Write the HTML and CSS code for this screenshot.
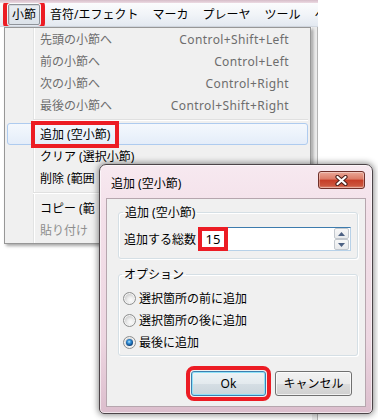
FILE: index.html
```html
<!DOCTYPE html>
<html lang="ja">
<head>
    <meta charset="UTF-8">
    <meta name="viewport" content="width=device-width, initial-scale=1.0">
    <title>追加 (空小節)</title>
    <link rel="stylesheet" href="styles.css">
</head>
<body>
    <div class="app">
        <div class="app-frame"></div>
        <div class="menubar">
            <span class="menubar-item is-open">小節</span>
            <span class="menubar-item">音符/エフェクト</span>
            <span class="menubar-item">マーカ</span>
            <span class="menubar-item">プレーヤ</span>
            <span class="menubar-item">ツール</span>
            <span class="menubar-item">ヘ</span>
        </div>
        <div class="workspace">
            <div class="sheet"></div>
            <div class="edge"></div>
        </div>
    </div>

    <!-- open "小節" menu -->
    <div class="menu">
        <div class="menu-item is-disabled"><span>先頭の小節へ</span><span class="shortcut">Control+Shift+Left</span></div>
        <div class="menu-item is-disabled"><span>前の小節へ</span><span class="shortcut">Control+Left</span></div>
        <div class="menu-item is-disabled"><span>次の小節へ</span><span class="shortcut">Control+Right</span></div>
        <div class="menu-item is-disabled"><span>最後の小節へ</span><span class="shortcut">Control+Shift+Right</span></div>
        <div class="menu-sep"></div>
        <div class="menu-item is-hover"><span class="mark">追加 (空小節)</span></div>
        <div class="menu-item"><span>クリア (選択小節)</span></div>
        <div class="menu-item"><span>削除 (範囲</span></div>
        <div class="menu-sep is-wide"></div>
        <div class="menu-item"><span>コピー (範</span></div>
        <div class="menu-item is-faded"><span>貼り付け</span></div>
    </div>

    <!-- dialog -->
    <div class="dialog">
        <div class="dialog-title">
            <span class="dialog-title-text">追加 (空小節)</span>
            <span class="dialog-close">
                <svg width="13" height="11" viewBox="0 0 13 11">
                    <path d="M2.5 2 L10.5 9 M10.5 2 L2.5 9" stroke="#4a1e18" stroke-width="4.2" stroke-linecap="round"/>
                    <path d="M2.5 2 L10.5 9 M10.5 2 L2.5 9" stroke="#fff" stroke-width="2.2" stroke-linecap="round"/>
                </svg>
            </span>
        </div>
        <div class="dialog-body">
            <fieldset class="group">
                <legend>追加 (空小節)</legend>
                <div class="field-row">
                    <span class="field-label">追加する総数</span>
                    <div class="spin">
                        <span class="spin-value">15</span>
                        <div class="spin-buttons">
                            <span class="spin-btn">
                                <svg width="7" height="4" viewBox="0 0 7 4"><path d="M0 4 L3.5 0 L7 4 Z" fill="#4d6183"/></svg>
                            </span>
                            <span class="spin-btn">
                                <svg width="7" height="4" viewBox="0 0 7 4"><path d="M0 0 L7 0 L3.5 4 Z" fill="#4d6183"/></svg>
                            </span>
                        </div>
                    </div>
                </div>
            </fieldset>

            <fieldset class="group group-options">
                <legend>オプション</legend>
                <div class="radio"><span class="radio-dot"></span>選択箇所の前に追加</div>
                <div class="radio"><span class="radio-dot"></span>選択箇所の後に追加</div>
                <div class="radio is-checked"><span class="radio-dot"></span>最後に追加</div>
            </fieldset>

            <div class="buttons">
                <span class="btn btn-default">Ok</span>
                <span class="btn">キャンセル</span>
            </div>
        </div>
    </div>
</body>
</html>
```

FILE: styles.css
```css
* {
    box-sizing: border-box;
}
html, body {
    margin: 0;
}
body {
    width: 378px;
    height: 420px;
    overflow: hidden;
    position: relative;
    background: #fff;
    font-family: "Noto Sans", "Noto Sans CJK JP", sans-serif;
    font-size: 12px;
    line-height: 17px;
    color: #000;
}

/* main window behind */
.app {
    width: 318px;
    height: 420px;
    display: flex;
    flex-direction: column;
}
.app-frame {
    height: 3px;
    background: linear-gradient(#d6bcc8, #ecdbe3);
}
.menubar {
    height: 24px;
    display: flex;
    align-items: center;
    gap: 6px;
    padding-left: 8px;
    background: linear-gradient(#fbfcfd, #f1f4f8 50%, #e3e9f1);
    border-bottom: 1px solid #d3d9e2;
    white-space: nowrap;
    overflow: hidden;
}
.menubar-item {
    padding: 1px 3px;
    border: 1px solid transparent;
    border-radius: 2px;
}
.menubar-item.is-open {
    border-color: #8f939a;
    background: linear-gradient(#e9edf2, #dce2e9);
    box-shadow: inset 1px 1px 0 rgba(0,0,0,0.08);
    outline: 4px solid #ec1c24;
    outline-offset: 1px;
}
.workspace {
    flex: 1;
    display: flex;
}
.sheet {
    flex: 1;
    background: #fff;
}
.edge {
    width: 6px;
    background: #ececec;
    border-right: 1px solid #b4b4b4;
}

/* dropdown menu */
.menu {
    position: absolute;
    left: 4px;
    top: 27px;
    width: 307px;
    padding: 0 0 2px;
    border: 1px solid #979797;
    background-color: #f0f0f0;
    background-image: linear-gradient(to right, transparent 28px, #e2e3e3 28px, #e2e3e3 29px, #fff 29px, #fff 30px, transparent 30px);
    box-shadow: 2px 2px 3px rgba(0,0,0,0.35);
}
.menu-item {
    height: 22px;
    margin: 0 2px;
    padding: 0 18px 0 32px;
    display: flex;
    align-items: center;
    justify-content: space-between;
    border: 1px solid transparent;
    border-radius: 3px;
    white-space: nowrap;
}
.menu-item .shortcut {
    letter-spacing: 0.4px;
}
.menu-item.is-disabled {
    color: #6d6d6d;
}
.menu-item.is-faded {
    color: #8d8d8d;
}
.menu-item.is-hover {
    border-color: #aecbef;
    background: linear-gradient(#f4f8fd, #e4edf9);
}
.menu-item .mark {
    padding: 0 4px;
    margin: 0 -4px;
    outline: 4px solid #ec1c24;
    outline-offset: 1px;
}
.menu-sep {
    height: 7px;
    margin: 0 2px 0 28px;
    display: flex;
    align-items: center;
}
.menu-sep.is-wide {
    height: 8px;
}
.menu-sep::before {
    content: "";
    flex: 1;
    border-top: 1px solid #e0e0e0;
    border-bottom: 1px solid #fff;
}

/* dialog window */
.dialog {
    position: absolute;
    left: 99px;
    top: 164px;
    width: 274px;
    height: 250px;
    padding: 0 6px 6px;
    display: flex;
    flex-direction: column;
    border: 1px solid #4c4448;
    border-radius: 7px 7px 5px 5px;
    background: linear-gradient(#f7e9f0, #f3e0e9 20%, #edd6e1 70%, #dcbecd);
    box-shadow: 0 0 6px 1px rgba(0,0,0,0.45), inset 0 0 0 1px rgba(255,255,255,0.6);
}
.dialog-title {
    height: 33px;
    display: flex;
    align-items: center;
    padding-left: 5px;
}
.dialog-title-text {
    flex: 1;
    margin-top: 3px;
}
.dialog-close {
    align-self: flex-start;
    margin-top: 6px;
    margin-right: 1px;
    width: 47px;
    height: 18px;
    display: flex;
    align-items: center;
    justify-content: center;
    border: 1px solid #70302a;
    border-radius: 3px;
    background: linear-gradient(#eaa898, #dc7a66 45%, #c63c26 50%, #cc553d 85%, #e0907c);
    box-shadow: inset 0 0 0 1px rgba(255,255,255,0.35);
}
.dialog-body {
    flex: 1;
    display: flex;
    flex-direction: column;
    padding: 5px 7px 0 11px;
    background: #f0f0f0;
    border: 1px solid #b6a6ae;
}

/* group boxes */
.group {
    margin: 0;
    padding: 6px 6px 7px 5px;
    border: 1px solid #d5dfe5;
    border-radius: 3px;
    box-shadow: inset 1px 1px 0 #fff, 1px 1px 0 #fff;
}
.group legend {
    padding: 0 2px;
    margin-left: -1px;
    line-height: 17px;
}
.group-options {
    margin-top: 7px;
    padding: 4px 6px 2px 4px;
}
.field-row {
    display: flex;
    align-items: center;
    gap: 2px;
}
.field-label {
    white-space: nowrap;
}
.spin {
    flex: 1;
    height: 24px;
    display: flex;
    background: #fff;
    border: 1px solid;
    border-color: #3d7bad #b7d1e8 #b7d1e8 #a4c3df;
}
.spin-value {
    width: 28px;
    text-align: center;
    line-height: 22px;
    font-size: 13px;
    outline: 4px solid #ec1c24;
    outline-offset: -3px;
}
.spin-buttons {
    margin-left: auto;
    margin-right: 1px;
    display: flex;
    flex-direction: column;
}
.spin-btn {
    width: 15px;
    height: 11px;
    display: flex;
    align-items: center;
    justify-content: center;
    border: 1px solid #c3c8ce;
    border-radius: 2px;
    background: linear-gradient(#f7f7f7, #e8eaec);
}

/* radio buttons */
.radio {
    height: 22px;
    display: flex;
    align-items: center;
    gap: 3px;
    white-space: nowrap;
}
.radio-dot {
    width: 13px;
    height: 13px;
    display: grid;
    place-items: center;
    border: 1px solid #8e8f8f;
    border-radius: 50%;
    background: radial-gradient(circle at 60% 65%, #fbfbfb 0, #eeeeee 3px, #d2d2d2 6px);
    box-shadow: inset 0 0 0 1px #f4f4f4;
}
.radio.is-checked .radio-dot::after {
    content: "";
    width: 7px;
    height: 7px;
    border-radius: 50%;
    background: radial-gradient(circle at 45% 40%, #bfeaff 0, #3d98dc 1.5px, #1a63a8 3px, #0c3e74 4px);
}

/* buttons */
.buttons {
    margin-top: 15px;
    margin-right: 6px;
    display: flex;
    justify-content: flex-end;
    gap: 9px;
}
.btn {
    width: 77px;
    height: 25px;
    display: flex;
    align-items: center;
    justify-content: center;
    border: 1px solid #707070;
    border-radius: 3px;
    background: linear-gradient(#f2f2f2, #ebebeb 50%, #dddddd 51%, #cfcfcf);
    box-shadow: inset 0 0 0 1px rgba(255,255,255,0.7);
}
.btn-default {
    width: 75px;
    border-color: #3c7fb1;
    background: linear-gradient(#eef3f6, #e3eaee 50%, #d5dee4 51%, #cad5dc);
    box-shadow: inset 0 0 0 1px #8fe2f8;
    outline: 4px solid #ec1c24;
    outline-offset: 1px;
}
```
